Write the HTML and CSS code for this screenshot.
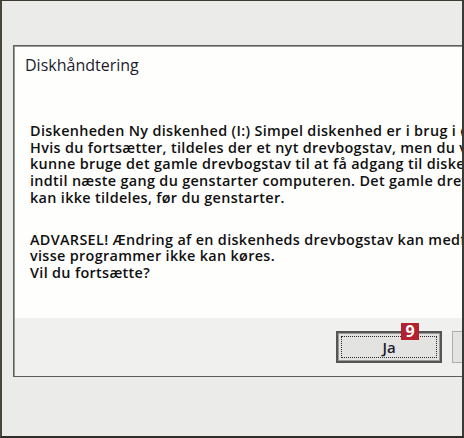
FILE: index.html
```html
<!DOCTYPE html>
<html lang="da">
<head>
<meta charset="utf-8">
<title>Diskhåndtering</title>
<link rel="stylesheet" href="styles.css">
</head>
<body>
<div class="frame">
  <div class="dialog">
    <div class="content">
      <div class="title">Diskhåndtering</div>
      <div class="msg">
        <p>Diskenheden Ny diskenhed (I:) Simpel diskenhed er i brug i øjeblikket.<br>Hvis du fortsætter, tildeles der et nyt drevbogstav, men du vil stadig<br>kunne bruge det gamle drevbogstav til at få adgang til diskenheden<br>indtil næste gang du genstarter computeren. Det gamle drevbogstav<br>kan ikke tildeles, før du genstarter.</p>
        <p>ADVARSEL! Ændring af en diskenheds drevbogstav kan medføre, at<br>visse programmer ikke kan køres.<br>Vil du fortsætte?</p>
      </div>
    </div>
    <div class="footer">
      <button class="btn btn-default"><span class="focus"><u>J</u>a</span><span class="badge">9</span></button>
      <button class="btn"><span class="focus"><u>N</u>ej</span></button>
    </div>
  </div>
</div>
</body>
</html>
```
FILE: styles.css
```css
html, body {
  margin: 0;
  padding: 0;
}
body {
  width: 464px;
  height: 438px;
  overflow: hidden;
  background: #ebebeb;
  font-family: "Open Sans", "Noto Sans", sans-serif;
}
.frame {
  box-sizing: border-box;
  width: 464px;
  height: 438px;
  background: #ebebea;
  border-left: 2px solid #4a4539;
  border-top: 1px solid #3d3a31;
  border-right: 2px solid #3b3a35;
  border-bottom: 2px solid #2e2d2a;
  overflow: hidden;
}
.dialog {
  box-sizing: border-box;
  margin-top: 44px;
  margin-left: 11px;
  width: 600px;
  height: 332px;
  border: 1px solid #5e5e5e;
  box-shadow: inset 1px 1px 0 #9a9a9a;
  background: #f0f0ef;
  display: flex;
  flex-direction: column;
}
.content {
  background: #fefefd;
  height: 271px;
  margin: 1px 0 0 1px;
  box-sizing: border-box;
  padding: 6px 0 0 10px;
}
.title {
  font-family: "Open Sans", sans-serif;
  font-size: 16px;
  line-height: 24px;
  color: #1c1c2e;
  font-weight: 400;
}
.msg {
  margin-top: 46px;
  padding-left: 5px;
  font-size: 14.4px;
  letter-spacing: 0.33px;
  line-height: 16.7px;
  font-weight: 600;
  color: #101010;
  white-space: nowrap;
}
.msg p {
  margin: 0 0 25px 0;
}
.footer {
  flex: 1;
  display: flex;
  align-items: flex-start;
  gap: 10px;
  padding: 13px 0 0 322px;
}
.btn {
  position: relative;
  box-sizing: border-box;
  width: 106px;
  height: 32px;
  padding: 4px;
  margin: 0;
  background: #e3e3e2;
  border: 1px solid #adadad;
  font-family: "Open Sans", sans-serif;
  font-size: 15px;
  font-weight: 600;
  color: #1b1b2b;
  display: flex;
}
.btn-default {
  border: 2px solid #555555;
  box-shadow: inset 0 0 0 1px #9a9a9a;
  padding: 3px;
}
.focus {
  flex: 1;
  display: flex;
  align-items: center;
  justify-content: center;
  line-height: 20px;
}
.btn-default .focus {
  border: 1px dotted #2a2a2a;
}
.badge {
  position: absolute;
  top: -10px;
  left: 63px;
  width: 18px;
  height: 17px;
  background: #b2232f;
  color: #ffffff;
  font-family: "Open Sans", sans-serif;
  font-weight: 700;
  font-size: 16px;
  line-height: 17px;
  text-align: center;
}
```
